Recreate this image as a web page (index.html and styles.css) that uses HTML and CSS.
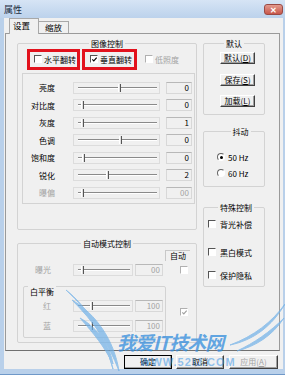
FILE: index.html
```html
<!DOCTYPE html>
<html lang="zh">
<head>
    <meta charset="UTF-8">
    <title>属性</title>
    <link rel="stylesheet" href="styles.css">
</head>
<body>
<div class="window">
    <div class="titlebar">
        <span class="title">属性</span>
        <span class="close">✕</span>
    </div>
    <div class="client">
        <div class="tabs">
            <div class="tab active">设置</div>
            <div class="tab">缩放</div>
        </div>
        <div class="panel">
            <div class="col-left">
                <div class="group group-image">
                    <div class="group-title">图像控制</div>
                    <div class="flip-row">
                        <div class="mark"><span class="check"></span>水平翻转</div>
                        <div class="mark mark-2"><span class="check"><svg viewBox="0 0 8 8"><polyline points="1.5,3.8 3.2,5.6 6.5,1.8"/></svg></span>垂直翻转</div>
                        <div class="low disabled"><span class="check"></span>低照度</div>
                    </div>
                    <div class="frame">
                        <div class="srow"><span class="slabel">亮度</span><div class="slider"><div class="track"></div><div class="thumb" style="left:44px"></div></div><div class="value">0</div></div>
                        <div class="srow"><span class="slabel">对比度</span><div class="slider"><div class="track"></div><div class="thumb" style="left:7px"></div></div><div class="value">0</div></div>
                        <div class="srow"><span class="slabel">灰度</span><div class="slider"><div class="track"></div><div class="thumb" style="left:7px"></div></div><div class="value">1</div></div>
                        <div class="srow"><span class="slabel">色调</span><div class="slider"><div class="track"></div><div class="thumb" style="left:45px"></div></div><div class="value">0</div></div>
                        <div class="srow"><span class="slabel">饱和度</span><div class="slider"><div class="track"></div><div class="thumb" style="left:8px"></div></div><div class="value">0</div></div>
                        <div class="srow"><span class="slabel">锐化</span><div class="slider"><div class="track"></div><div class="thumb" style="left:32px"></div></div><div class="value">2</div></div>
                        <div class="srow disabled"><span class="slabel">曝偏</span><div class="slider"><div class="track"></div><div class="thumb" style="left:7px"></div></div><div class="value">00</div></div>
                    </div>
                </div>
                <div class="group group-auto">
                    <div class="group-title">自动模式控制</div>
                    <div class="auto-head">自动</div>
                    <div class="arow disabled">
                        <span class="slabel">曝光</span>
                        <div class="slider short"><div class="track"></div><div class="thumb" style="left:7px"></div></div>
                        <div class="value wide">00</div>
                        <span class="check auto-check"></span>
                    </div>
                    <div class="wb-row">
                        <div class="group wb">
                            <div class="group-title left">白平衡</div>
                            <div class="arow disabled">
                                <span class="slabel">红</span>
                                <div class="slider short"><div class="track"></div><div class="thumb" style="left:16px"></div></div>
                                <div class="value wide">100</div>
                            </div>
                            <div class="arow disabled">
                                <span class="slabel">蓝</span>
                                <div class="slider short"><div class="track"></div><div class="thumb" style="left:16px"></div></div>
                                <div class="value wide">100</div>
                            </div>
                        </div>
                        <span class="check auto-check disabled"><svg viewBox="0 0 8 8"><polyline points="1.5,3.8 3.2,5.6 6.5,1.8"/></svg></span>
                    </div>
                </div>
            </div>
            <div class="col-right">
                <div class="group group-default">
                    <div class="group-title">默认</div>
                    <div class="btn-stack">
                        <div class="btn small">默认(<u>D</u>)</div>
                        <div class="btn small">保存(<u>S</u>)</div>
                        <div class="btn small">加载(<u>L</u>)</div>
                    </div>
                </div>
                <div class="group group-flicker">
                    <div class="group-title">抖动</div>
                    <div class="opt first"><span class="radio on"></span>50 Hz</div>
                    <div class="opt second"><span class="radio"></span>60 Hz</div>
                </div>
                <div class="group group-special">
                    <div class="group-title">特殊控制</div>
                    <div class="opt sp1"><span class="check"></span>背光补偿</div>
                    <div class="opt sp2"><span class="check"></span>黑白模式</div>
                    <div class="opt sp3"><span class="check"></span>保护隐私</div>
                </div>
            </div>
        </div>
        <div class="buttons">
            <div class="btn default">确定</div>
            <div class="btn">取消</div>
            <div class="btn disabled">应用(<u>A</u>)</div>
        </div>
    </div>
    <div class="watermark">
        <svg class="wings" viewBox="0 0 285 375">
            <path d="M66 290 C 86 306, 102 330, 113 369 C 104 336, 90 312, 66 290 Z" />
            <path d="M72 300 C 96 314, 114 340, 119 371 C 108 342, 94 322, 72 300 Z" />
            <path d="M80 318 C 98 328, 110 346, 113 364 C 104 346, 94 334, 80 318 Z" />
            <path d="M285 304 C 272 322, 254 336, 230 345 C 254 340, 272 326, 285 304 Z" />
            <path d="M284 318 C 270 332, 254 343, 237 351 C 256 346, 272 336, 284 318 Z" />
        </svg>
        <div class="wm-big">我爱IT技术网</div>
        <div class="wm-url">WWW.52IJ.COM</div>
    </div>
</div>
</body>
</html>
```

FILE: styles.css
```css
body {
    margin: 0;
    font-family: "Noto Sans CJK SC", "Noto Sans", sans-serif;
    font-size: 8px;
    color: #000;
}

.window {
    position: relative;
    width: 285px;
    height: 375px;
    box-sizing: border-box;
    padding: 0 2px 5px 4px;
    background: #b9d0ea;
    border-bottom: 1px solid #6f98c8;
    display: flex;
    flex-direction: column;
    overflow: hidden;
}

.titlebar {
    height: 18px;
    display: flex;
    align-items: center;
    justify-content: space-between;
    background: linear-gradient(#d6e4f5, #bcd2ec);
    margin: 0 -2px 0 -4px;
    padding: 0 2px 0 4px;
}

.title {
    font-size: 9px;
    color: #1a2b40;
}

.close {
    width: 19px;
    height: 11px;
    box-sizing: border-box;
    border: 1px solid #9a4a44;
    border-radius: 3px;
    background: linear-gradient(#e39a8e, #c8574b);
    color: #fff;
    font-size: 8px;
    line-height: 9px;
    text-align: center;
    font-weight: bold;
}

.client {
    flex: 1;
    background: #f0f0f0;
    display: flex;
    flex-direction: column;
}

/* tabs */
.tabs {
    height: 15px;
    display: flex;
    align-items: flex-end;
    padding-left: 5px;
    position: relative;
    z-index: 1;
}

.tab {
    height: 12px;
    box-sizing: border-box;
    padding: 0 6px;
    border-top: 1px solid #a8a8a8;
    border-right: 1px solid #a8a8a8;
    line-height: 11px;
    font-size: 8.5px;
}

.tab.active {
    height: 16px;
    margin-bottom: -1px;
    border-left: 1px solid #a8a8a8;
    padding: 0 8px 0 3px;
    background: #f0f0f0;
    line-height: 12px;
}

.panel {
    margin-left: 1px;
    width: 275px;
    height: 318px;
    box-sizing: border-box;
    border: 1px solid #9a9a9a;
    border-bottom-color: #707070;
    padding: 9px 0 0 11px;
    display: flex;
}

.col-left {
    width: 180px;
    display: flex;
    flex-direction: column;
}

.col-right {
    width: 62px;
    margin-left: 6px;
    display: flex;
    flex-direction: column;
}

/* group boxes */
.group {
    box-sizing: border-box;
    border: 1px solid #d3d3d3;
    border-radius: 2px;
}

.group-title {
    width: max-content;
    margin: -6px auto 0;
    padding: 0 2px;
    background: #f0f0f0;
    line-height: 11px;
}

.group-title.left {
    margin-left: 4px;
}

.group-image {
    height: 187px;
}

.flip-row {
    height: 22px;
    margin-top: -1px;
    padding-left: 9px;
    display: flex;
    align-items: center;
}

.mark {
    width: 53px;
    height: 21px;
    box-sizing: border-box;
    border: 3px solid #e2121d;
    padding-left: 4px;
    display: flex;
    align-items: center;
}

.mark-2 {
    width: 55px;
    margin-left: 2px;
    padding-left: 5px;
}

.low {
    margin-left: 8px;
    display: flex;
    align-items: center;
}

.check {
    width: 8px;
    height: 8px;
    box-sizing: border-box;
    border-top: 1px solid #555;
    border-left: 1px solid #555;
    border-right: 1px solid #fff;
    border-bottom: 1px solid #fff;
    background: #fff;
    margin-right: 2px;
    display: inline-block;
    flex-shrink: 0;
}

.check svg {
    display: block;
    width: 7px;
    height: 7px;
    fill: none;
    stroke: #000;
    stroke-width: 1.3;
}

.disabled {
    color: #a3a3a3;
}

.disabled .check,
.check.disabled {
    border-color: #b0b0b0 #fff #fff #b0b0b0;
}

.check.disabled svg {
    stroke: #a0a0a0;
}

.frame {
    height: 131px;
    margin: 3px 1px 0 4px;
    box-sizing: border-box;
    border: 1px solid #d3d3d3;
    padding-top: 5px;
}

.srow {
    height: 17.5px;
    display: flex;
    align-items: center;
}

.slabel {
    width: 32px;
    text-align: right;
}

.slider {
    position: relative;
    width: 87px;
    height: 12px;
    margin-left: 18px;
    box-sizing: border-box;
    border: 1px solid #dcdcdc;
}

.track {
    position: absolute;
    left: 4px;
    right: 2px;
    top: 4px;
    height: 2px;
    border-top: 1px solid #8a8a8a;
    border-bottom: 1px solid #fff;
    box-sizing: border-box;
}

.thumb {
    position: absolute;
    top: 1px;
    width: 3px;
    height: 8px;
    box-sizing: border-box;
    border-left: 1px solid #fff;
    border-right: 1px solid #555;
    background: #e0e0e0;
}

.value {
    width: 26px;
    height: 12px;
    margin-left: 6px;
    box-sizing: border-box;
    border: 1px solid #d8d8d8;
    border-top-color: #b8b8b8;
    text-align: right;
    padding-right: 2px;
    line-height: 10px;
}

/* auto mode */
.group-auto {
    height: 100px;
    margin-top: 13px;
}

.auto-head {
    width: 25px;
    height: 11px;
    margin: 1px 0 0 147px;
    box-sizing: border-box;
    border-top: 1px solid #c8c8c8;
    border-left: 1px solid #c8c8c8;
    text-align: center;
    line-height: 10px;
}

.arow {
    height: 17px;
    display: flex;
    align-items: center;
}

.arow .slabel {
    width: 33px;
}

.slider.short {
    width: 60px;
    margin-left: 22px;
}

.value.wide {
    width: 28px;
    margin-left: 2px;
}

.auto-check {
    margin-left: 17px;
}

.wb-row {
    margin-top: 8px;
    display: flex;
    align-items: center;
}

.wb {
    width: 143px;
    height: 52px;
    margin-left: 5px;
    padding-top: 5px;
}

.wb .arow + .arow {
    margin-top: 3px;
}

.wb .arow .slabel {
    width: 27px;
}

.wb-row .auto-check {
    margin-left: 14px;
}

/* right column */
.group-default {
    height: 72px;
}

.btn-stack {
    display: flex;
    flex-direction: column;
    gap: 9.5px;
    padding: 3px 0 0 16px;
}

.btn {
    box-sizing: border-box;
    height: 14px;
    width: 48px;
    background: #f0f0f0;
    border: 1px solid;
    border-color: #fff #404040 #404040 #fff;
    box-shadow: inset -1px -1px #a0a0a0;
    text-align: center;
    line-height: 12px;
}

.btn.small {
    width: 35px;
    height: 12px;
    line-height: 10px;
}

.btn.default {
    outline: 1px solid #000;
    outline-offset: -1px;
}

.btn u {
    text-decoration: underline;
}

.group-flicker {
    height: 56px;
    margin-top: 16px;
    padding-left: 13px;
}

.opt {
    height: 10px;
    display: flex;
    align-items: center;
}

.opt.first {
    margin-top: 15px;
}

.opt.second {
    margin-top: 6px;
}

.radio {
    width: 8px;
    height: 8px;
    box-sizing: border-box;
    border-radius: 50%;
    border: 1px solid;
    border-color: #666 #fff #fff #666;
    background: #fff;
    margin-right: 3px;
    position: relative;
}

.radio.on::after {
    content: "";
    position: absolute;
    left: 1.5px;
    top: 1.5px;
    width: 3px;
    height: 3px;
    border-radius: 50%;
    background: #000;
}

.group-special {
    height: 80px;
    margin-top: 20px;
    padding-left: 4px;
}

.group-special .check {
    margin-right: 4px;
}

.opt.sp1 {
    margin-top: 6px;
}

.opt.sp2 {
    margin-top: 18px;
}

.opt.sp3 {
    margin-top: 13px;
}

/* bottom buttons */
.buttons {
    display: flex;
    gap: 4px;
    margin-top: 4px;
    padding-left: 120px;
}

.buttons .btn:nth-child(3) {
    width: 49px;
    margin-left: 1px;
}

/* site watermark */
.watermark {
    position: absolute;
    left: 0;
    top: 0;
    width: 285px;
    height: 375px;
    pointer-events: none;
}

.wings {
    position: absolute;
    left: 0;
    top: 0;
    width: 285px;
    height: 375px;
    fill: #6fb0e8;
    stroke: #6fb0e8;
    stroke-width: 1;
    opacity: 0.7;
}

.wm-big {
    position: absolute;
    left: 117px;
    top: 328px;
    font-size: 19px;
    font-weight: bold;
    font-style: italic;
    color: rgba(50, 140, 220, 0.75);
    letter-spacing: -1px;
}

.wm-url {
    position: absolute;
    left: 140px;
    top: 356px;
    font-family: "Liberation Sans", sans-serif;
    font-size: 11px;
    font-weight: bold;
    color: rgba(60, 150, 230, 0.55);
    letter-spacing: 1px;
}
```
